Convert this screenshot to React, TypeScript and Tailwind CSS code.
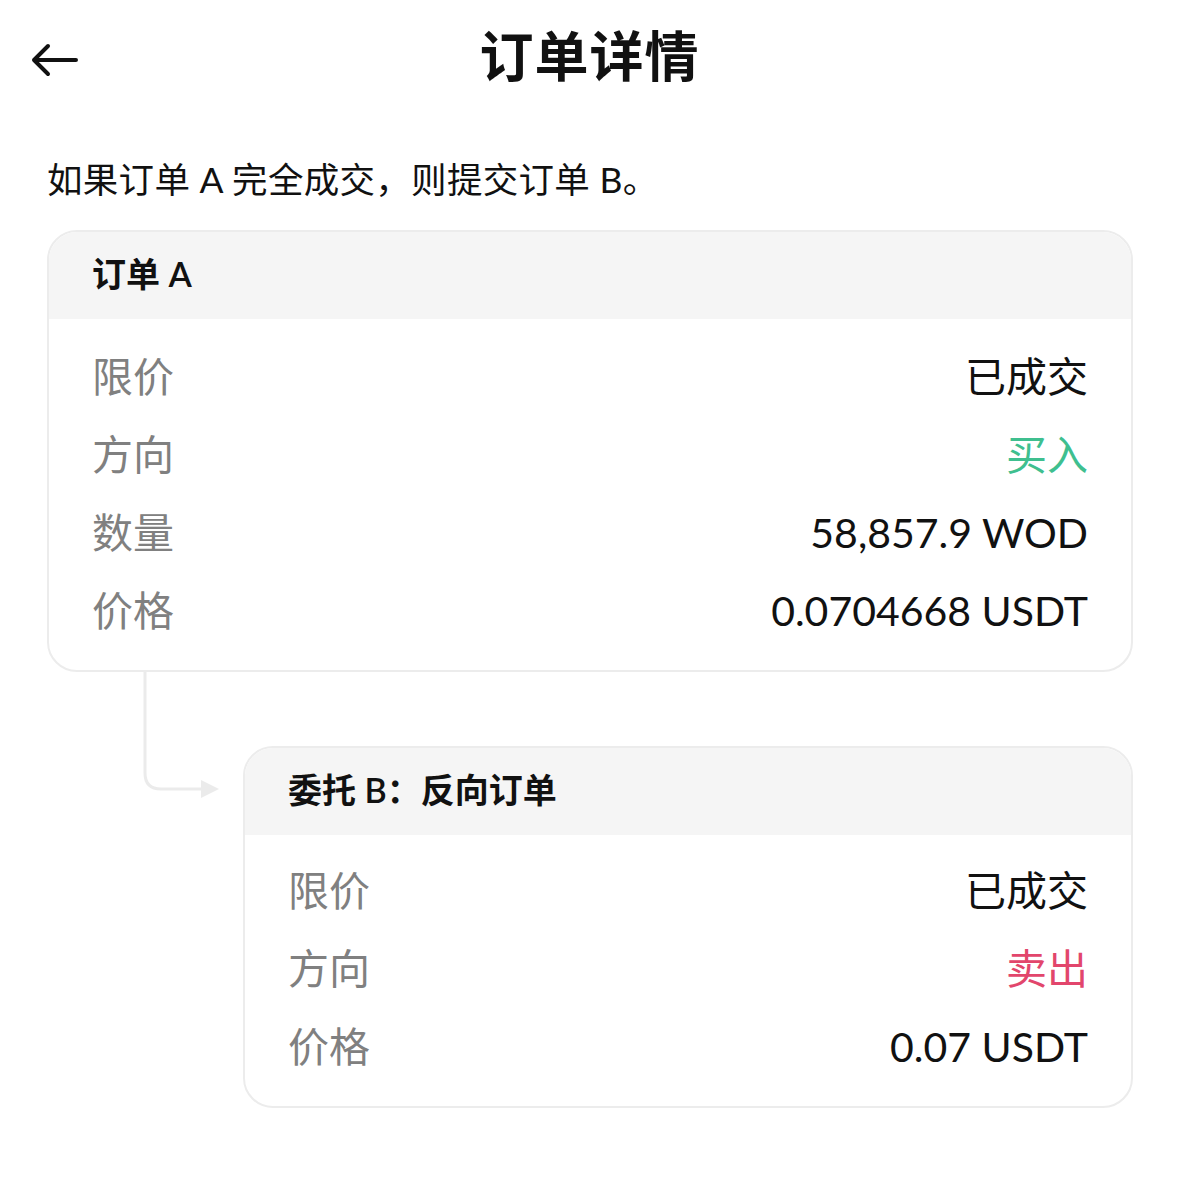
import React from 'react'

const font = { fontFamily: '"Lato", "Noto Sans CJK SC", sans-serif' }

type Row = { label: string; value: string; tone?: 'buy' | 'sell' }

function InfoRow({ label, value, tone }: Row) {
    const valueColor =
        tone === 'buy' ? 'text-[#3fbf8f]' : tone === 'sell' ? 'text-[#e2466c]' : 'text-[#111111]'
    return (
        <div className="flex h-[78px] items-center justify-between">
            <span className="text-[41px] text-[#808080]">{label}</span>
            <span className={`text-[41px] ${valueColor}`}>{value}</span>
        </div>
    )
}

function OrderCard({ title, rows, top }: { title: string; rows: Row[]; top: string }) {
    return (
        <div className="overflow-hidden rounded-[30px] border-2 border-[#ececec] bg-white">
            <div className="flex h-[87px] items-center bg-[#f5f5f5] px-[43px] pb-[4px]">
                <span className="text-[34px] font-semibold text-[#111111]">{title}</span>
            </div>
            <div className={`px-[43px] pb-[21px] ${top}`}>
                {rows.map((r) => (
                    <InfoRow key={r.label} {...r} />
                ))}
            </div>
        </div>
    )
}

export default function App() {
    return (
        <main className="min-h-screen w-[1179px] bg-white text-[#111111]" style={font}>
            {/* Top bar */}
            <div className="relative flex h-[112px] items-center justify-center">
                <svg
                    className="absolute left-[30px] top-[42px]"
                    width="50"
                    height="36"
                    viewBox="0 0 50 36"
                    fill="none"
                    stroke="#111111"
                    strokeWidth="4"
                    strokeLinecap="round"
                    strokeLinejoin="round"
                >
                    <path d="M46 18 H4 M18 4 L4 18 L18 32" />
                </svg>
                <h1 className="text-[54px] font-bold tracking-[1px]">订单详情</h1>
            </div>

            <div className="px-[47px]">
                <p className="mt-[41px] text-[35.5px] tracking-[0.3px] text-[#111111]">
                    如果订单 A 完全成交，则提交订单 B。
                </p>

                <div className="mt-[24px] w-[1086px]">
                    <OrderCard
                        title="订单 A"
                        top="pt-[18px]"
                        rows={[
                            { label: '限价', value: '已成交' },
                            { label: '方向', value: '买入', tone: 'buy' },
                            { label: '数量', value: '58,857.9 WOD' },
                            { label: '价格', value: '0.0704668 USDT' },
                        ]}
                    />

                    {/* Connector + card B */}
                    <div className="relative mt-[74px] pl-[196px]">
                        <svg
                            className="absolute left-0 -top-[74px]"
                            width="196"
                            height="140"
                            viewBox="0 0 196 140"
                            fill="none"
                        >
                            <path
                                d="M98 0 V101 Q98 117 114 117 H158"
                                stroke="#ebebeb"
                                strokeWidth="3"
                            />
                            <path d="M154 108 L172 117 L154 126 Z" fill="#ebebeb" />
                        </svg>
                        <OrderCard
                            title="委托 B：反向订单"
                            top="pt-[16px]"
                            rows={[
                                { label: '限价', value: '已成交' },
                                { label: '方向', value: '卖出', tone: 'sell' },
                                { label: '价格', value: '0.07 USDT' },
                            ]}
                        />
                    </div>
                </div>
            </div>
        </main>
    )
}
